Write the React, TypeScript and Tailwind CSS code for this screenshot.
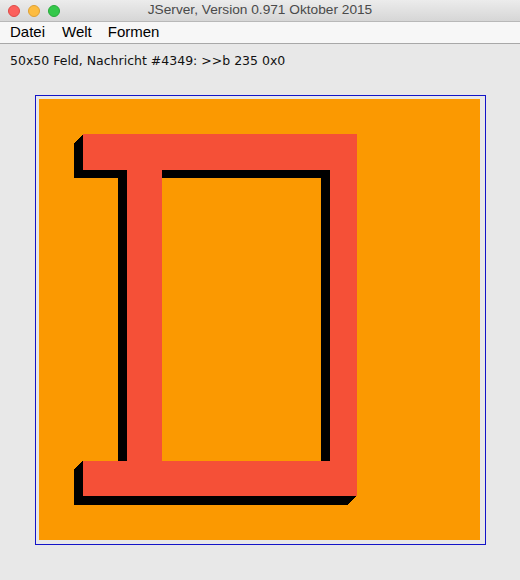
const outer = 'M5 4 H36 V45 H5 V41 H10 V8 H5 Z M14 8 V41 H33 V8 Z';
const shadow =
  'M5 4 H36 V45 L35 46 H4 V42 L5 41 H9 V9 H4 V5 Z M14 9 V41 H32 V9 Z';

const Canvas = () => (
  <svg
    width={441}
    height={441}
    viewBox="0 0 50 50"
    shapeRendering="crispEdges"
    className="block"
  >
    <rect x={0} y={0} width={50} height={50} fill="#fb9901" />
    <path d={shadow} fill="#000" fillRule="evenodd" />
    <path d={outer} fill="#f55037" fillRule="evenodd" />
  </svg>
);

const App = () => {
  return (
    <div
      className="w-[520px] h-[580px] bg-[#e8e8e8] flex flex-col overflow-hidden"
      style={{ fontFamily: '"Liberation Sans", Arial, sans-serif' }}
    >
      {/* title bar */}
      <div className="relative h-[22px] flex items-center justify-center bg-gradient-to-b from-[#ececec] to-[#d6d6d6] border-b border-[#b8b8b8]">
        <div className="absolute left-[8px] top-[5px] flex gap-[8px]">
          <span className="w-[12px] h-[12px] rounded-full bg-[#fc605c] border border-[#de4a46]" />
          <span className="w-[12px] h-[12px] rounded-full bg-[#fdbc40] border border-[#dea033]" />
          <span className="w-[12px] h-[12px] rounded-full bg-[#34c84a] border border-[#28a93b]" />
        </div>
        <span className="text-[13.7px] text-[#4a4a4a]">
          JServer, Version 0.971 Oktober 2015
        </span>
      </div>

      {/* menu */}
      <div className="h-[22px] flex items-center bg-[#f7f7f7] border-b border-[#a8a8a8] text-[15px] text-black">
        <span className="ml-[10px]">Datei</span>
        <span className="ml-[17px]">Welt</span>
        <span className="ml-[16px]">Formen</span>
      </div>

      {/* status */}
      <div className="pt-[9px] pl-[10px] text-[12.5px] leading-[16px] text-[#111] font-['DejaVu_Sans',sans-serif]">
        50x50 Feld, Nachricht #4349: &gt;&gt;b 235 0x0
      </div>

      {/* board */}
      <div className="mt-[26px] pl-[35px]">
        <div className="w-[451px] h-[450px] border border-[#1414c8] p-[3px]">
          <Canvas />
        </div>
      </div>
    </div>
  );
};

export default App;
